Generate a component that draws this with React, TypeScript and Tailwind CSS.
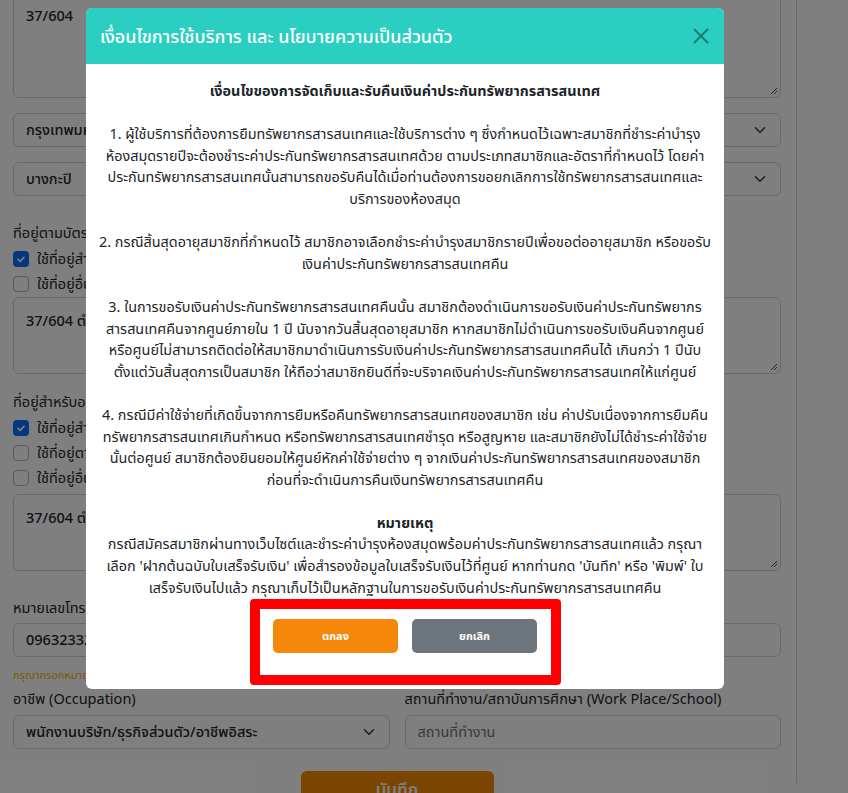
import { ReactNode } from "react";

const FONT = "font-['Noto_Sans','Noto_Sans_Thai',sans-serif]";

const TERMS: { bold?: boolean; lines: string[] }[] = [
  { bold: true, lines: ["เงื่อนไขของการจัดเก็บและรับคืนเงินค่าประกันทรัพยากรสารสนเทศ"] },
  {
    lines: [
      "1. ผู้ใช้บริการที่ต้องการยืมทรัพยากรสารสนเทศและใช้บริการต่าง ๆ ซึ่งกำหนดไว้เฉพาะสมาชิกที่ชำระค่าบำรุง",
      "ห้องสมุดรายปีจะต้องชำระค่าประกันทรัพยากรสารสนเทศด้วย ตามประเภทสมาชิกและอัตราที่กำหนดไว้ โดยค่า",
      "ประกันทรัพยากรสารสนเทศนั้นสามารถขอรับคืนได้เมื่อท่านต้องการขอยกเลิกการใช้ทรัพยากรสารสนเทศและ",
      "บริการของห้องสมุด",
    ],
  },
  {
    lines: [
      "2. กรณีสิ้นสุดอายุสมาชิกที่กำหนดไว้ สมาชิกอาจเลือกชำระค่าบำรุงสมาชิกรายปีเพื่อขอต่ออายุสมาชิก หรือขอรับ",
      "เงินค่าประกันทรัพยากรสารสนเทศคืน",
    ],
  },
  {
    lines: [
      "3. ในการขอรับเงินค่าประกันทรัพยากรสารสนเทศคืนนั้น สมาชิกต้องดำเนินการขอรับเงินค่าประกันทรัพยากร",
      "สารสนเทศคืนจากศูนย์ภายใน 1 ปี นับจากวันสิ้นสุดอายุสมาชิก หากสมาชิกไม่ดำเนินการขอรับเงินคืนจากศูนย์",
      "หรือศูนย์ไม่สามารถติดต่อให้สมาชิกมาดำเนินการรับเงินค่าประกันทรัพยากรสารสนเทศคืนได้ เกินกว่า 1 ปีนับ",
      "ตั้งแต่วันสิ้นสุดการเป็นสมาชิก ให้ถือว่าสมาชิกยินดีที่จะบริจาคเงินค่าประกันทรัพยากรสารสนเทศให้แก่ศูนย์",
    ],
  },
  {
    lines: [
      "4. กรณีมีค่าใช้จ่ายที่เกิดขึ้นจากการยืมหรือคืนทรัพยากรสารสนเทศของสมาชิก เช่น ค่าปรับเนื่องจากการยืมคืน",
      "ทรัพยากรสารสนเทศเกินกำหนด หรือทรัพยากรสารสนเทศชำรุด หรือสูญหาย และสมาชิกยังไม่ได้ชำระค่าใช้จ่าย",
      "นั้นต่อศูนย์ สมาชิกต้องยินยอมให้ศูนย์หักค่าใช้จ่ายต่าง ๆ จากเงินค่าประกันทรัพยากรสารสนเทศของสมาชิก",
      "ก่อนที่จะดำเนินการคืนเงินทรัพยากรสารสนเทศคืน",
    ],
  },
];

const NOTE = [
  "กรณีสมัครสมาชิกผ่านทางเว็บไซต์และชำระค่าบำรุงห้องสมุดพร้อมค่าประกันทรัพยากรสารสนเทศแล้ว กรุณา",
  "เลือก 'ฝากต้นฉบับใบเสร็จรับเงิน' เพื่อสำรองข้อมูลใบเสร็จรับเงินไว้ที่ศูนย์ หากท่านกด 'บันทึก' หรือ 'พิมพ์' ใบ",
  "เสร็จรับเงินไปแล้ว กรุณาเก็บไว้เป็นหลักฐานในการขอรับเงินค่าประกันทรัพยากรสารสนเทศคืน",
];

function Chevron() {
  return (
    <svg width="12" height="12" viewBox="0 0 16 16" fill="none" stroke="#343a40" strokeWidth="2" strokeLinecap="round" strokeLinejoin="round">
      <path d="M2 5l6 6 6-6" />
    </svg>
  );
}

function Select({ value, className = "" }: { value: string; className?: string }) {
  return (
    <div className={`flex h-[34px] items-center justify-between rounded-[6px] border border-[#ced4da] bg-white pl-[12px] pr-[14px] text-[14.5px] font-medium text-[#212529] ${className}`}>
      <span>{value}</span>
      <Chevron />
    </div>
  );
}

function TextArea({ value, className = "" }: { value: string; className?: string }) {
  return (
    <div className={`relative rounded-[6px] border border-[#ced4da] bg-white px-[12px] pt-[8px] text-[14.5px] font-medium text-[#212529] ${className}`}>
      {value}
      <svg className="absolute bottom-[2px] right-[2px]" width="8" height="8" viewBox="0 0 8 8" stroke="#555" strokeWidth="1">
        <path d="M1 7L7 1M4 7L7 4" />
      </svg>
    </div>
  );
}

function Check({ checked, label }: { checked?: boolean; label: string }) {
  return (
    <div className="flex h-[25px] items-center gap-[8px] text-[14.5px] text-[#212529]">
      {checked ? (
        <span className="flex h-[16px] w-[16px] items-center justify-center rounded-[4px] bg-[#0d6efd]">
          <svg width="10" height="10" viewBox="0 0 12 12" fill="none" stroke="white" strokeWidth="2" strokeLinecap="round" strokeLinejoin="round">
            <path d="M2.5 6.5l2.5 2.5 4.5-5" />
          </svg>
        </span>
      ) : (
        <span className="h-[16px] w-[16px] rounded-[4px] border border-[#adb5bd] bg-white" />
      )}
      <span>{label}</span>
    </div>
  );
}

function Label({ children, className = "" }: { children: ReactNode; className?: string }) {
  return <div className={`text-[14.5px] text-[#212529] ${className}`}>{children}</div>;
}

function BackgroundForm() {
  return (
    <div className="h-full w-[797px] border-r border-[#ced4da] pl-[13px] pr-[15px]">
      <TextArea value="37/604" className="-mt-[10px] h-[108px] pt-[14px]" />
      <Select value="กรุงเทพมหานคร" className="mt-[15px]" />
      <Select value="บางกะปิ" className="mt-[15px]" />
      <Label className="mt-[24px] leading-[24px]">ที่อยู่ตามบัตรประชาชน</Label>
      <div className="mt-[2px]">
        <Check checked label="ใช้ที่อยู่สำหรับติดต่อ" />
        <Check label="ใช้ที่อยู่อื่น" />
      </div>
      <TextArea value="37/604 ตำบลคลองจั่น" className="mt-[1px] h-[77px] pt-[12px]" />
      <Label className="mt-[15px] leading-[24px]">ที่อยู่สำหรับออกใบเสร็จรับเงิน</Label>
      <div className="mt-[2px]">
        <Check checked label="ใช้ที่อยู่สำหรับติดต่อ" />
        <Check label="ใช้ที่อยู่ตามบัตรประชาชน" />
        <Check label="ใช้ที่อยู่อื่น" />
      </div>
      <TextArea value="37/604 ตำบลคลองจั่น" className="mt-[4px] h-[77px] pt-[12px]" />
      <Label className="mt-[24px] leading-[24px]">หมายเลขโทรศัพท์</Label>
      <div className="mt-[4px] flex h-[34px] items-center rounded-[6px] border border-[#ced4da] bg-white px-[12px] text-[14.5px] font-medium text-[#212529]">
        0963233200
      </div>
      <div className="mt-[11px] text-[11px] leading-[14px] text-[#f0b400]">กรุณากรอกหมายเลขโทรศัพท์</div>
      <div className="mt-[4px] grid grid-cols-2 gap-[15px]">
        <div>
          <Label className="leading-[24px]">อาชีพ (Occupation)</Label>
          <Select value="พนักงานบริษัท/ธุรกิจส่วนตัว/อาชีพอิสระ" className="mt-[5px]" />
        </div>
        <div>
          <Label className="leading-[24px]">สถานที่ทำงาน/สถาบันการศึกษา (Work Place/School)</Label>
          <div className="mt-[5px] flex h-[34px] items-center rounded-[6px] border border-[#ced4da] bg-white px-[12px] text-[14.5px] text-[#6c757d]">
            สถานที่ทำงาน
          </div>
        </div>
      </div>
      <div className="mt-[22px] flex justify-center">
        <div className="flex h-[40px] w-[193px] items-start justify-center rounded-[6px] bg-[#f58a00] pt-[6px] text-[17px] font-semibold text-white">
          บันทึก
        </div>
      </div>
    </div>
  );
}

function Modal() {
  return (
    <div className="w-[638px] overflow-hidden rounded-[6px] bg-white">
      <div className="flex h-[56px] items-center justify-between bg-[#2bcfc1] pl-[14px] pr-[15px]">
        <h1 className="text-[18px] font-medium text-white">เงื่อนไขการใช้บริการ และ นโยบายความเป็นส่วนตัว</h1>
        <svg width="16" height="16" viewBox="0 0 16 16" stroke="#1b7d75" strokeWidth="2" strokeLinecap="round">
          <path d="M1.5 1.5l13 13M14.5 1.5l-13 13" />
        </svg>
      </div>
      <div className="px-[12px] pt-[16px] text-center text-[14.4px] leading-[21.6px] text-[#212529]">
        {TERMS.map((p, i) => (
          <div key={i} className={p.bold ? "font-bold" : ""}>
            {p.lines.map((l) => (
              <div key={l} className="whitespace-nowrap">{l}</div>
            ))}
            <div className="h-[21.6px]" />
          </div>
        ))}
        <div className="font-bold">หมายเหตุ</div>
        {NOTE.map((l) => (
          <div key={l} className="whitespace-nowrap">{l}</div>
        ))}
      </div>
      <div className="flex justify-center gap-[14px] pb-[36px] pt-[21px]">
        <button className="h-[34px] w-[125px] rounded-[5px] bg-[#f5870a] text-[11px] font-bold text-white">ตกลง</button>
        <button className="h-[34px] w-[125px] rounded-[5px] bg-[#6c757d] text-[11px] font-bold text-white">ยกเลิก</button>
      </div>
    </div>
  );
}

export default function App() {
  return (
    <div className={`relative h-[793px] w-[848px] overflow-hidden bg-white ${FONT}`}>
      <BackgroundForm />
      <div className="absolute inset-0 bg-black/50 pl-[86px] pt-[8px]">
        <Modal />
      </div>
      {/* annotation box round the buttons */}
      <div className="absolute left-[250px] top-[599px] h-[86px] w-[311px] rounded-[4px] border-[10px] border-[#ff0000]" />
    </div>
  );
}
